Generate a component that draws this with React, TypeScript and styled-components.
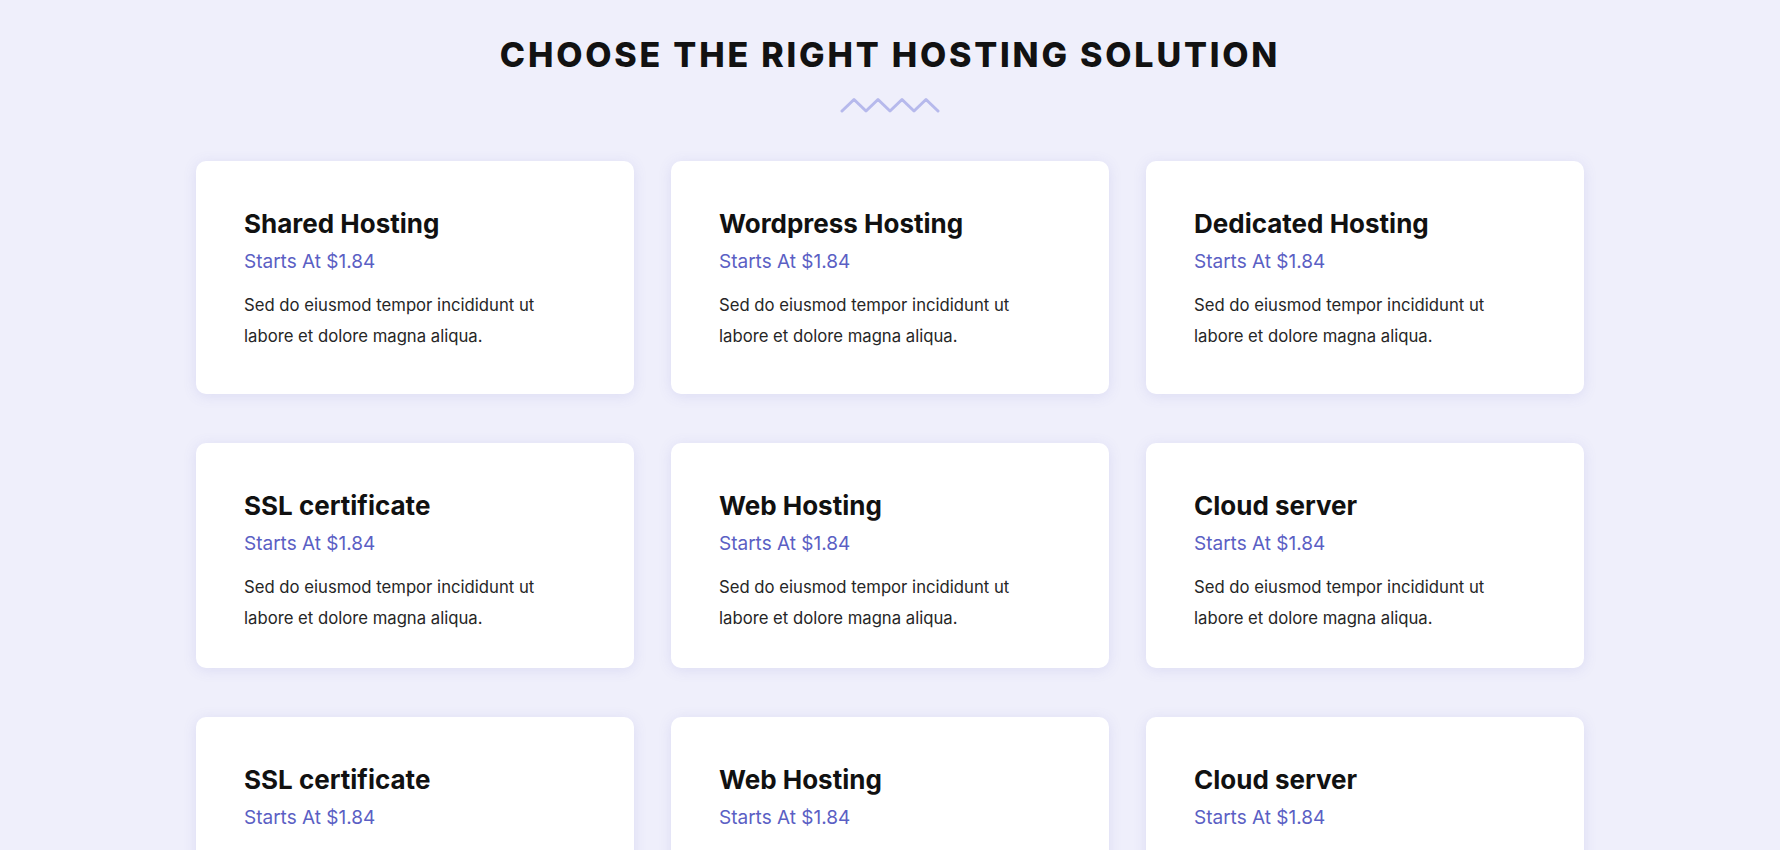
import styled, { createGlobalStyle } from "styled-components";

type PlanT = {
  title: string;
  price: string;
};

const GlobalStyle = createGlobalStyle`
  html {
    scrollbar-width: none;
  }
  body {
    margin: 0;
    background: #efeffb;
    font-family: Inter, "Liberation Sans", sans-serif;
    color: #1a1a1a;
  }
`;

const Page = styled.main`
  display: flex;
  flex-direction: column;
  align-items: center;
  padding-top: 34px;
  padding-bottom: 60px;
`;

const Heading = styled.h1`
  margin: 0;
  font-size: 34px;
  line-height: 41px;
  font-weight: 800;
  letter-spacing: 2.8px;
  color: #121212;
  text-transform: uppercase;
`;

const Zigzag = styled.svg`
  display: block;
  margin-top: 22px;
  width: 100px;
  height: 16px;
`;

const Grid = styled.div`
  margin-top: 48px;
  display: grid;
  grid-template-columns: repeat(3, 438px);
  column-gap: 37px;
  row-gap: 49px;
`;

const Card = styled.div<{ $tall?: boolean }>`
  background: #ffffff;
  border-radius: 10px;
  box-shadow: 0 2px 14px rgba(92, 92, 190, 0.13);
  box-sizing: border-box;
  padding: 47px 40px 0 48px;
  min-height: ${(p) => (p.$tall ? "233px" : "225px")};
`;

const Title = styled.h3`
  margin: 0;
  font-size: 26px;
  line-height: 32px;
  font-weight: 700;
  color: #111111;
`;

const Price = styled.p`
  margin: 10px 0 0;
  font-size: 19px;
  line-height: 24px;
  color: #5b5fc4;
`;

const Text = styled.p`
  margin: 16px 0 0;
  font-size: 16.7px;
  line-height: 31px;
  color: #262626;
`;

const plans: PlanT[] = [
  { title: "Shared Hosting", price: "Starts At $1.84" },
  { title: "Wordpress Hosting", price: "Starts At $1.84" },
  { title: "Dedicated Hosting", price: "Starts At $1.84" },
  { title: "SSL certificate", price: "Starts At $1.84" },
  { title: "Web Hosting", price: "Starts At $1.84" },
  { title: "Cloud server", price: "Starts At $1.84" },
  { title: "SSL certificate", price: "Starts At $1.84" },
  { title: "Web Hosting", price: "Starts At $1.84" },
  { title: "Cloud server", price: "Starts At $1.84" },
];

const App = () => {
  return (
    <>
      <GlobalStyle />
      <Page>
        <Heading>Choose the right hosting solution</Heading>
        <Zigzag viewBox="0 0 100 16" aria-hidden="true">
          <polyline
            points="2,14 14,2.5 26,14 38,2.5 50,14 62,2.5 74,14 86,2.5 98,14"
            fill="none"
            stroke="#b6b9ec"
            strokeWidth="3"
            strokeLinejoin="round"
            strokeLinecap="round"
          />
        </Zigzag>
        <Grid>
          {plans.map((plan, i) => (
            <Card key={i} $tall={i < 3}>
              <Title>{plan.title}</Title>
              <Price>{plan.price}</Price>
              <Text>
                Sed do eiusmod tempor incididunt ut
                <br />
                labore et dolore magna aliqua.
              </Text>
            </Card>
          ))}
        </Grid>
      </Page>
    </>
  );
};

export default App;
